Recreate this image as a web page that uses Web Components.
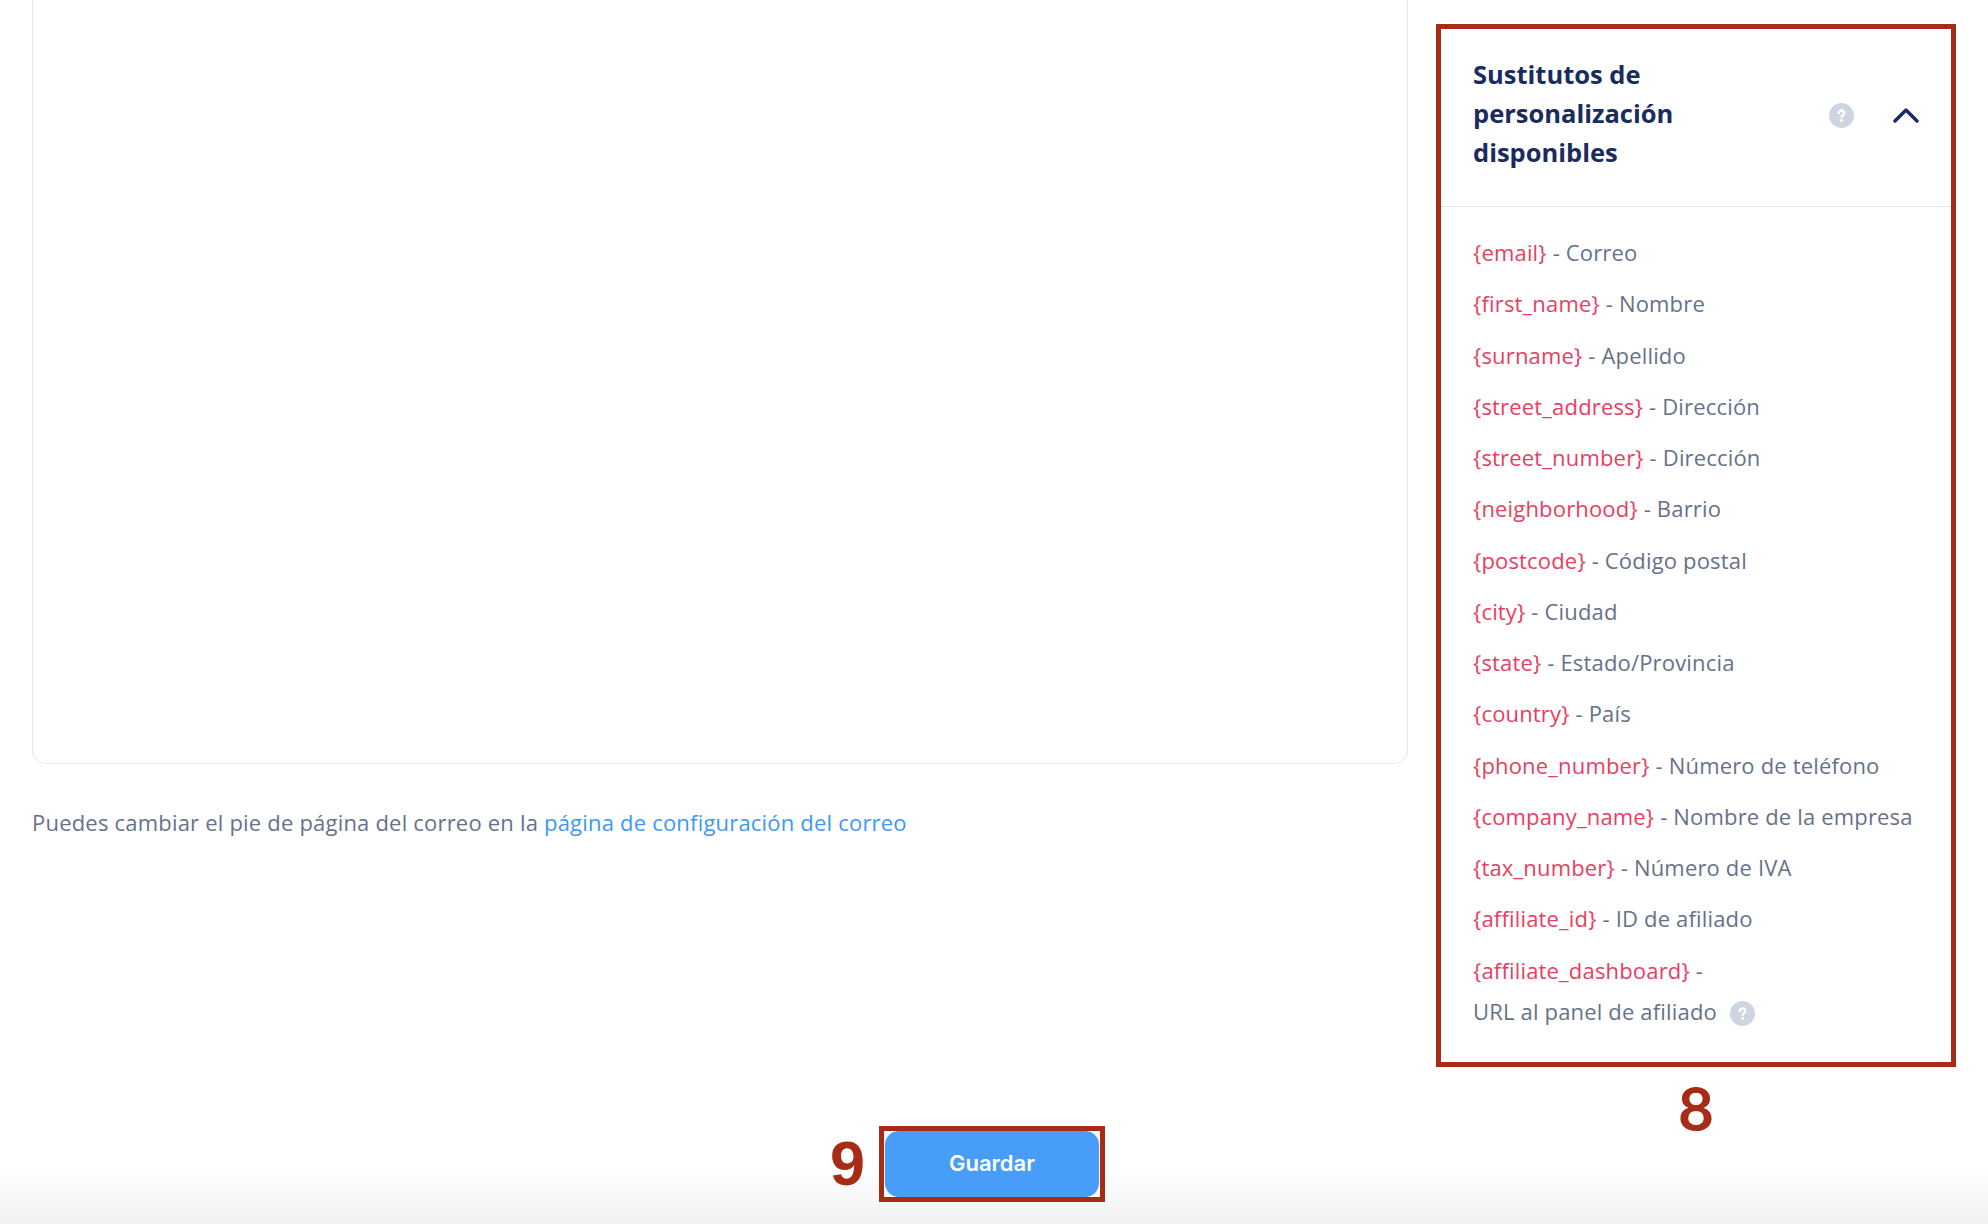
<!DOCTYPE html>
<html lang="es">
<head>
<meta charset="utf-8">
<title>Sustitutos de personalización</title>
<style>
  html, body { margin: 0; height: 100%; background: #fff; }
  body { font-family: 'Open Sans', 'Liberation Sans', sans-serif; overflow: hidden; }
</style>
</head>
<body>

<template id="help-tpl">
  <style>
    :host { display: inline-flex; width: 25px; height: 25px; flex: none; }
    svg { width: 100%; height: 100%; display: block; }
  </style>
  <svg viewBox="0 0 24 24" aria-hidden="true">
    <circle cx="12" cy="12" r="12" fill="#cdd5e1"/>
    <path d="M9.4 9.6c0-1.5 1.1-2.4 2.7-2.4 1.5 0 2.6.9 2.6 2.2 0 1-.5 1.6-1.4 2.2-.8.5-1.1.9-1.1 1.7" fill="none" stroke="#fff" stroke-width="2.4" stroke-linecap="round"/>
    <circle cx="12.1" cy="16.8" r="1.5" fill="#fff"/>
  </svg>
</template>

<template id="row-tpl">
  <style>
    :host { display: block; font-size: 22px; line-height: 33px; letter-spacing: .17px; color: #66728a; margin-bottom: 18.27px; white-space: nowrap; }
    .token { color: #e8405f; }
  </style>
  <span class="token"><slot name="token"></slot></span> - <slot></slot>
</template>

<template id="panel-tpl">
  <style>
    :host { display: block; width: 520px; box-sizing: border-box; border: 5px solid #a62c15; background: #fff; }
    header { display: flex; align-items: center; height: 178px; box-sizing: border-box; padding: 0 32px 5px 32px; border-bottom: 1px solid #e3e7ee; }
    h2 { flex: 1; margin: 0 0 3px; font-size: 25.5px; line-height: 39px; font-weight: 700; color: #1a2b5f; }
    h2 div { max-width: 240px; }
    .chevron { width: 26px; height: 16px; margin-left: 39px; display: block; }
    .body { padding: 29px 20px 16px 32px; }
  </style>
  <header>
    <h2><div><slot name="title"></slot></div></h2>
    <help-icon></help-icon>
    <svg class="chevron" viewBox="0 0 26 16" aria-hidden="true"><path d="M2 14 13 3l11 11" fill="none" stroke="#1a2b5f" stroke-width="3.4" stroke-linecap="round" stroke-linejoin="round"/></svg>
  </header>
  <div class="body"><slot></slot></div>
</template>

<template id="editor-tpl">
  <style>
    :host { display: block; }
    .box { height: 764px; box-sizing: border-box; border: 1.5px solid #e6e8ec; border-top: 0; border-radius: 0 0 14px 14px; }
    p { margin: 42px 0 0; font-size: 22px; line-height: 33px; letter-spacing: .2px; color: #66728a; }
    ::slotted(a) { color: #3f97f6; text-decoration: none; }
  </style>
  <div class="box"></div>
  <p><slot></slot></p>
</template>

<template id="save-tpl">
  <style>
    :host { display: block; position: relative; width: 226px; box-sizing: border-box; border: 5px solid #a62c15; background: #fff; }
    button { display: block; width: 214px; height: 66px; padding: 0 0 2px; margin: 0 auto; border: 0; border-radius: 14px; background: #479df8; color: #fff; font: 600 22px Inter, 'Liberation Sans', sans-serif; }
    .num { position: absolute; right: 235px; top: 1px; font: 700 63px/63px 'Liberation Sans', sans-serif; color: #a62c15; }
  </style>
  <span class="num">9</span>
  <button><slot></slot></button>
</template>

<template id="page-tpl">
  <style>
    :host { display: flex; flex-direction: column; height: 1224px; box-sizing: border-box; background: linear-gradient(to bottom, #fff 0, #fff 1170px, #f1f1f1 1224px); }
    .main { display: flex; height: 1126px; padding: 0 32px 0 32px; box-sizing: border-box; gap: 28px; }
    .left { width: 1376px; flex: none; }
    .right { padding-top: 24px; display: flex; flex-direction: column; align-items: center; }
    .num { font: 700 62px/62px Lato, 'Liberation Sans', sans-serif; color: #a62c15; margin-top: 9px; }
    .bar { display: flex; justify-content: center; padding-right: 4px; }
  </style>
  <div class="main">
    <div class="left"><slot name="left"></slot></div>
    <div class="right"><slot name="right"></slot><span class="num">8</span></div>
  </div>
  <div class="bar"><slot name="save"></slot></div>
</template>

<settings-page>
  <editor-box slot="left">Puedes cambiar el pie de página del correo en la <a href="#">página de configuración del correo</a></editor-box>
  <placeholder-panel slot="right">
    <span slot="title">Sustitutos de personalización disponibles</span>
    <token-row><span slot="token">{email}</span>Correo</token-row>
    <token-row><span slot="token">{first_name}</span>Nombre</token-row>
    <token-row><span slot="token">{surname}</span>Apellido</token-row>
    <token-row><span slot="token">{street_address}</span>Dirección</token-row>
    <token-row><span slot="token">{street_number}</span>Dirección</token-row>
    <token-row><span slot="token">{neighborhood}</span>Barrio</token-row>
    <token-row><span slot="token">{postcode}</span>Código postal</token-row>
    <token-row><span slot="token">{city}</span>Ciudad</token-row>
    <token-row><span slot="token">{state}</span>Estado/Provincia</token-row>
    <token-row><span slot="token">{country}</span>País</token-row>
    <token-row><span slot="token">{phone_number}</span>Número de teléfono</token-row>
    <token-row><span slot="token">{company_name}</span>Nombre de la empresa</token-row>
    <token-row><span slot="token">{tax_number}</span>Número de IVA</token-row>
    <token-row><span slot="token">{affiliate_id}</span>ID de afiliado</token-row>
    <token-row><span slot="token">{affiliate_dashboard}</span><div style="margin-top:8px">URL al panel de afiliado <help-icon style="vertical-align:-6px;margin-left:7px"></help-icon></div></token-row>
  </placeholder-panel>
  <save-button slot="save">Guardar</save-button>
</settings-page>

<script>
'use strict';

// every element here only stamps its template into an open shadow root
function define(name, tplId) {
  customElements.define(name, class extends HTMLElement {
    constructor() {
      super();
      const tpl = document.getElementById(tplId);
      this.attachShadow({mode: 'open'}).appendChild(tpl.content.cloneNode(true));
    }
  });
}

define('help-icon', 'help-tpl');
define('token-row', 'row-tpl');
define('placeholder-panel', 'panel-tpl');
define('editor-box', 'editor-tpl');
define('save-button', 'save-tpl');
define('settings-page', 'page-tpl');
</script>
</body>
</html>
